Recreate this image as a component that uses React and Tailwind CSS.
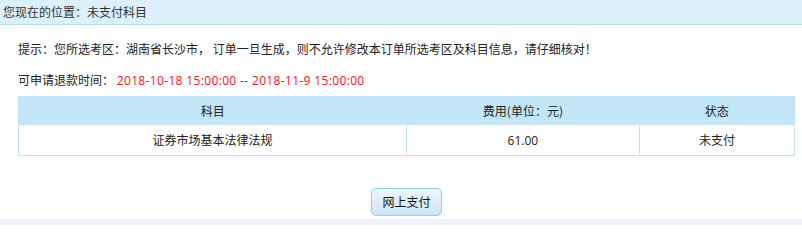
import React from 'react';

const FONT = { fontFamily: '"Microsoft YaHei", "Noto Sans CJK SC", "Liberation Sans", sans-serif' };
const LATIN = { fontFamily: '"Open Sans", "Noto Sans CJK SC", sans-serif' };

export default function App() {
  return (
    <div className="w-[802px] h-[225px] bg-white flex flex-col text-[12px] text-[#222]" style={FONT}>
      {/* 位置栏 */}
      <div className="h-[25px] bg-[#dbf0fa] border-b border-[#b5dff3] pl-[3px] flex items-center text-[12px] text-[#333]">
        您现在的位置：未支付科目
      </div>

      <div className="flex-1 pl-[18px] pr-[7px]">
        <p className="mt-[16px] leading-[16px]">
          提示：您所选考区：湖南省长沙市， 订单一旦生成，则不允许修改本订单所选考区及科目信息，请仔细核对！
        </p>
        <p className="mt-[15px] leading-[16px]">
          可申请退款时间：{' '}
          <span className="text-[#f5141e] tracking-[0.35px]" style={LATIN}>
            2018-10-18 15:00:00 -- 2018-11-9 15:00:00
          </span>
        </p>

        <table className="mt-[7px] w-full border-collapse border border-[#c2e4f6] text-center">
          <thead>
            <tr className="bg-[#c2e6f7] h-[28px]">
              <th className="w-1/2 font-normal">科目</th>
              <th className="w-[30%] font-normal">费用(单位：元)</th>
              <th className="w-1/5 font-normal">状态</th>
            </tr>
          </thead>
          <tbody>
            <tr className="h-[31px]">
              <td className="border border-[#c2e4f6]">证券市场基本法律法规</td>
              <td className="border border-[#c2e4f6]"><span style={LATIN}>61.00</span></td>
              <td className="border border-[#c2e4f6]">未支付</td>
            </tr>
          </tbody>
        </table>

        <div className="flex justify-center mt-[32px]">
          <button className="w-[71px] h-[28px] rounded-[5px] border border-[#8fcdee] bg-gradient-to-b from-[#eef7fd] to-[#cde5f8] text-[12px] text-[#111]">
            网上支付
          </button>
        </div>
      </div>

      <div className="h-[6px] bg-[#edf2f9]" />
    </div>
  );
}
